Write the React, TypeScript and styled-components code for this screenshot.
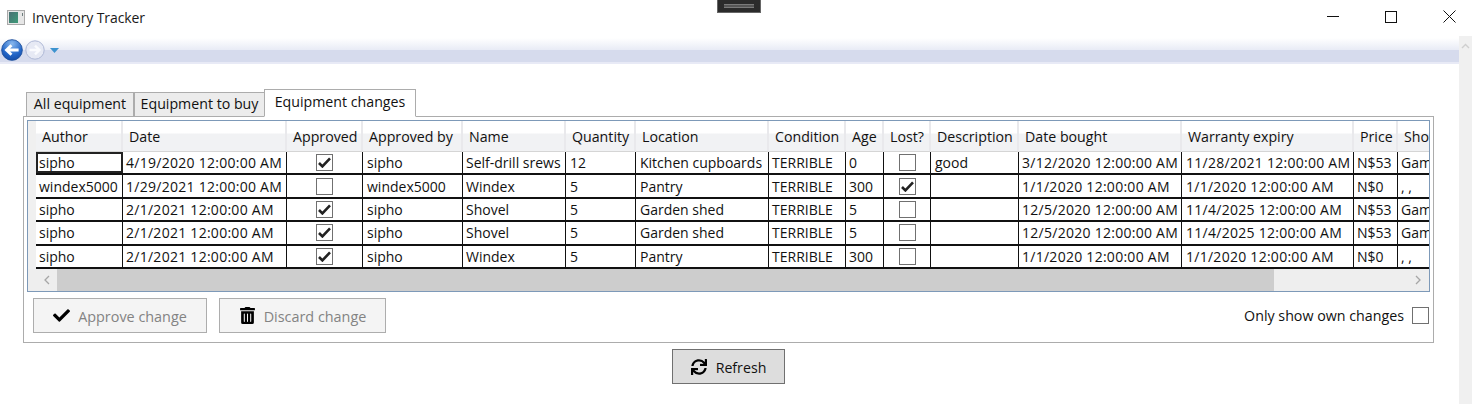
import React from 'react';
import styled, { createGlobalStyle } from 'styled-components';
import { FaCheck, FaTrashAlt, FaSync } from 'react-icons/fa';

const Global = createGlobalStyle`
  html, body { margin: 0; padding: 0; background: #fff; overflow: hidden; }
  body { font-family: "Open Sans", "Noto Sans", "Liberation Sans", sans-serif; font-size: 14px; color: #111; }
`;

const Windowed = styled.div`
  position: relative;
  width: 1472px;
  height: 404px;
  display: flex;
  flex-direction: column;
  overflow: hidden;
`;
const TitleBar = styled.div`
  height: 36px;
  display: flex;
  align-items: center;
  padding-left: 7px;
  gap: 7px;
  flex: none;
`;
const TitleText = styled.span`
  font-size: 14px;
  letter-spacing: -0.1px;
  flex: 1;
  color: #1a1a1a;
  padding-bottom: 2px;
`;
const WinButtons = styled.div`
  display: flex;
  align-items: center;
  gap: 46px;
  padding-right: 16px;
  padding-bottom: 3px;
`;
const DragHandle = styled.div`
  position: absolute;
  left: 717px;
  top: 0;
  width: 44px;
  height: 13px;
  background: #2b2b2b;
  border: 1px solid #666;
  border-top: none;
  box-sizing: border-box;
  display: flex;
  align-items: center;
  justify-content: center;
  &::after {
    content: '';
    width: 30px;
    height: 2px;
    margin-top: -1px;
    border-top: 1px solid #7a7a7a;
    border-bottom: 1px solid #7a7a7a;
    background: #555;
  }
`;
const Body = styled.div`
  flex: 1;
  display: flex;
  min-height: 0;
`;
const Main = styled.div`
  flex: 1;
  min-width: 0;
  display: flex;
  flex-direction: column;
`;
const VScroll = styled.div`
  width: 13px;
  flex: none;
  background: #f0f0f0;
  display: flex;
  justify-content: center;
  padding-top: 7px;
  box-sizing: border-box;
`;
const NavBar = styled.div`
  height: 28px;
  flex: none;
  display: flex;
  align-items: center;
  padding-left: 1px;
  gap: 2px;
  background: linear-gradient(to bottom, #fff 0, #fff 2px, #e9ecf6 13.5px, #d6dbed 14.5px, #d6dbed 26px, #e8eaf6 26.5px, #e8eaf6 28px);
`;
const TabArea = styled.div`
  margin: 25px 25px 0 23px;
  display: flex;
  flex-direction: column;
`;
const TabStrip = styled.div`
  display: flex;
  align-items: flex-end;
  height: 28px;
  padding-left: 3px;
  margin-bottom: -1px;
  position: relative;
  z-index: 1;
`;
const Tab = styled.div<{ $active?: boolean; $w: number }>`
  box-sizing: border-box;
  width: ${(p) => p.$w}px;
  height: ${(p) => (p.$active ? 28 : 25)}px;
  border: 1px solid #acacac;
  border-bottom-color: ${(p) => (p.$active ? '#fff' : '#acacac')};
  margin-left: ${(p) => (p.$active ? -1 : 0)}px;
  background: ${(p) => (p.$active ? '#fff' : '#ececec')};
  display: flex;
  align-items: center;
  justify-content: center;
  font-size: 14.2px;
  white-space: nowrap;
  padding-bottom: 3px;
`;
const Panel = styled.div`
  box-sizing: border-box;
  height: 227px;
  border: 1px solid #acacac;
  padding: 3px 3px 0;
  display: flex;
  flex-direction: column;
`;
const GridFrame = styled.div`
  box-sizing: border-box;
  height: 172px;
  flex: none;
  border: 1px solid #7d99b8;
  display: flex;
  flex-direction: column;
  overflow: hidden;
`;
const GridBody = styled.div`
  flex: 1;
  overflow: hidden;
  padding-left: 8px;
  background: linear-gradient(to right, #f0f0f0 8px, #fff 8px);
`;
const cols = '87px 164px 76px 100px 103px 70px 133px 77px 38px 47px 88px 163px 172px 44px 60px';
const HeaderRow = styled.div`
  display: grid;
  grid-template-columns: ${cols};
  height: 31px;
`;
const HeaderCell = styled.div`
  box-sizing: border-box;
  padding: 0 0 0 6px;
  display: flex;
  align-items: center;
  background: linear-gradient(to bottom, #fff 0, #fff 12px, #f1f2f4 13px, #f1f2f4 100%);
  border-right: 2px solid #e9e9ec;
  border-bottom: 1px solid #d5d5d5;
  white-space: nowrap;
  overflow: hidden;
  font-size: 14.2px;
`;
const DataRow = styled.div`
  display: grid;
  grid-template-columns: ${cols};
  height: 23.4px;
  box-sizing: border-box;
  border-bottom: 2px solid #111;
`;
const Cell = styled.div<{ $focus?: boolean; $date?: boolean; $inset?: boolean }>`
  box-sizing: border-box;
  padding: 0 0 0 ${(p) => (p.$inset ? 4 : 3)}px;
  display: flex;
  align-items: center;
  justify-content: flex-start;
  border-right: 1px solid #111;
  white-space: nowrap;
  overflow: hidden;
  font-size: 14px;
  letter-spacing: ${(p) => (p.$date ? '0.27px' : '0')};
  ${(p) => p.$focus && 'outline: 2px solid #222; outline-offset: -2px;'}
`;
const CheckCell = styled(Cell)`
  justify-content: center;
  padding: 0;
`;
const Box = styled.span`
  width: 17px;
  height: 17px;
  box-sizing: border-box;
  border: 1px solid #707070;
  background: #fff;
  display: inline-flex;
  align-items: center;
  justify-content: center;
  flex: none;
`;
const HScroll = styled.div`
  height: 22px;
  flex: none;
  display: flex;
  align-items: center;
  background: #eeeeee;
`;
const HButton = styled.div`
  width: 29px;
  height: 100%;
  display: flex;
  align-items: center;
  justify-content: center;
  padding-left: 8px;
  box-sizing: border-box;
  flex: none;
`;
const HThumb = styled.div`
  width: 1217px;
  height: 100%;
  background: #cdcdcd;
  flex: none;
`;
const HTrack = styled.div`
  flex: 1;
  height: 100%;
  display: flex;
  align-items: center;
  justify-content: flex-end;
  padding-right: 7px;
`;
const ActionRow = styled.div`
  display: flex;
  align-items: center;
  padding: 6px 1px 0 6px;
  gap: 12px;
`;
const ActionButton = styled.button<{ $w: number }>`
  box-sizing: border-box;
  width: ${(p) => p.$w}px;
  height: 35px;
  border: 1px solid #adadad;
  background: #f4f4f4;
  color: #838383;
  font: inherit;
  font-size: 14.4px;
  display: flex;
  align-items: center;
  justify-content: center;
  gap: 8px;
  padding: 1px 0 0;
  svg { color: #000; flex: none; margin-top: -1px; }
`;
const OwnToggle = styled.label`
  margin-left: auto;
  display: flex;
  align-items: center;
  gap: 8px;
  font-size: 14.25px;
  line-height: 19px;
  span { margin-top: -1px; }
`;
const RefreshWrap = styled.div`
  display: flex;
  justify-content: center;
  padding-top: 6px;
  margin-right: 2px;
`;
const RefreshButton = styled.button`
  box-sizing: border-box;
  width: 113px;
  height: 35px;
  border: 1px solid #707070;
  background: #dddddd;
  color: #111;
  font: inherit;
  font-size: 14.2px;
  display: flex;
  align-items: center;
  justify-content: center;
  gap: 9px;
  padding: 1px 0 0;
  svg { color: #000; flex: none; margin-top: -1px; }
`;

const Tick = () => (
  <svg width="13" height="11" viewBox="0 0 13 11" aria-hidden="true">
    <path d="M1 6 L4.4 9.4 L12 1.4" fill="none" stroke="#222" strokeWidth="2.6" />
  </svg>
);
const Check = ({ on }: { on?: boolean }) => <Box>{on && <Tick />}</Box>;

const headers = ['Author', 'Date', 'Approved', 'Approved by', 'Name', 'Quantity', 'Location', 'Condition', 'Age', 'Lost?', 'Description', 'Date bought', 'Warranty expiry', 'Price', 'Shop'];
type Row = { a: string; d: string; ok: boolean; by: string; n: string; q: string; l: string; c: string; age: string; lost: boolean; desc: string; b: string; w: string; p: string; s: string };
const rows: Row[] = [
  { a: 'sipho', d: '4/19/2020 12:00:00 AM', ok: true, by: 'sipho', n: 'Self-drill srews', q: '12', l: 'Kitchen cupboards', c: 'TERRIBLE', age: '0', lost: false, desc: 'good', b: '3/12/2020 12:00:00 AM', w: '11/28/2021 12:00:00 AM', p: 'N$53', s: 'Game' },
  { a: 'windex5000', d: '1/29/2021 12:00:00 AM', ok: false, by: 'windex5000', n: 'Windex', q: '5', l: 'Pantry', c: 'TERRIBLE', age: '300', lost: true, desc: '', b: '1/1/2020 12:00:00 AM', w: '1/1/2020 12:00:00 AM', p: 'N$0', s: ', ,' },
  { a: 'sipho', d: '2/1/2021 12:00:00 AM', ok: true, by: 'sipho', n: 'Shovel', q: '5', l: 'Garden shed', c: 'TERRIBLE', age: '5', lost: false, desc: '', b: '12/5/2020 12:00:00 AM', w: '11/4/2025 12:00:00 AM', p: 'N$53', s: 'Game' },
  { a: 'sipho', d: '2/1/2021 12:00:00 AM', ok: true, by: 'sipho', n: 'Shovel', q: '5', l: 'Garden shed', c: 'TERRIBLE', age: '5', lost: false, desc: '', b: '12/5/2020 12:00:00 AM', w: '11/4/2025 12:00:00 AM', p: 'N$53', s: 'Game' },
  { a: 'sipho', d: '2/1/2021 12:00:00 AM', ok: true, by: 'sipho', n: 'Windex', q: '5', l: 'Pantry', c: 'TERRIBLE', age: '300', lost: false, desc: '', b: '1/1/2020 12:00:00 AM', w: '1/1/2020 12:00:00 AM', p: 'N$0', s: ', ,' },
];

const AppIcon = () => (
  <svg width="18" height="16" viewBox="0 0 18 16" aria-hidden="true">
    <rect x="0.5" y="0.5" width="17" height="14" fill="#e6e6e6" stroke="#a9a9a9" />
    <defs>
      <linearGradient id="ai" x1="0" y1="0" x2="1" y2="1">
        <stop offset="0" stopColor="#4a6f73" />
        <stop offset="1" stopColor="#3d9a78" />
      </linearGradient>
    </defs>
    <rect x="2" y="2" width="9" height="11" fill="url(#ai)" />
    <rect x="15" y="3" width="1" height="3" fill="#6d7d7d" />
  </svg>
);

const BackBtn = () => (
  <svg width="22" height="22" viewBox="0 0 20 20" aria-hidden="true">
    <defs>
      <radialGradient id="bk" cx="0.5" cy="0.2" r="0.95">
        <stop offset="0" stopColor="#8ab9ee" />
        <stop offset="0.55" stopColor="#2467c8" />
        <stop offset="1" stopColor="#0d3f98" />
      </radialGradient>
    </defs>
    <circle cx="10" cy="10" r="9.4" fill="url(#bk)" stroke="#1b4f9c" strokeWidth="0.8" />
    <path d="M16 10 H5.5 M9.5 5.6 L5 10 L9.5 14.4" fill="none" stroke="#fff" strokeWidth="2.6" />
  </svg>
);
const FwdBtn = () => (
  <svg width="20" height="20" viewBox="0 0 20 20" aria-hidden="true">
    <circle cx="10" cy="10" r="9.2" fill="#e6e9f4" stroke="#aeb8d6" strokeWidth="1" />
    <path d="M4.5 10 H14 M10 5.6 L14.5 10 L10 14.4" fill="none" stroke="#fafbfe" strokeWidth="2.4" />
  </svg>
);
const NavDrop = () => (
  <svg width="9" height="5" viewBox="0 0 9 5" style={{ marginLeft: 3 }} aria-hidden="true">
    <path d="M0 0 H9 L4.5 5 Z" fill="#3d93cf" />
  </svg>
);
const Chevron = ({ d }: { d: string }) => (
  <svg width="8" height="10" viewBox="0 0 8 10" aria-hidden="true">
    <path d={d} fill="none" stroke="#a6a6a6" strokeWidth="1.3" />
  </svg>
);

export default function App() {
  return (
    <Windowed>
      <Global />
      <TitleBar>
        <AppIcon />
        <TitleText>Inventory Tracker</TitleText>
        <WinButtons>
          <svg width="12" height="12" viewBox="0 0 12 12" aria-hidden="true"><path d="M0 5.5 H12" stroke="#111" /></svg>
          <svg width="12" height="12" viewBox="0 0 12 12" aria-hidden="true"><rect x="0.5" y="0.5" width="11" height="11" fill="none" stroke="#111" /></svg>
          <svg width="13" height="13" viewBox="0 0 13 13" aria-hidden="true"><path d="M0.5 0.5 L12.5 12.5 M12.5 0.5 L0.5 12.5" stroke="#111" /></svg>
        </WinButtons>
      </TitleBar>
      <DragHandle />
      <Body>
        <Main>
          <NavBar>
            <BackBtn />
            <FwdBtn />
            <NavDrop />
          </NavBar>
          <TabArea>
            <TabStrip>
              <Tab $w={108}>All equipment</Tab>
              <Tab $w={131}>Equipment to buy</Tab>
              <Tab $active $w={152}>Equipment changes</Tab>
            </TabStrip>
            <Panel>
              <GridFrame>
                <GridBody>
                  <HeaderRow>
                    {headers.map((h) => (
                      <HeaderCell key={h}>{h}</HeaderCell>
                    ))}
                  </HeaderRow>
                  {rows.map((r, i) => (
                    <DataRow key={i}>
                      <Cell $focus={i === 0}>{r.a}</Cell>
                      <Cell $date>{r.d}</Cell>
                      <CheckCell><Check on={r.ok} /></CheckCell>
                      <Cell $inset>{r.by}</Cell>
                      <Cell>{r.n}</Cell>
                      <Cell $inset>{r.q}</Cell>
                      <Cell $inset>{r.l}</Cell>
                      <Cell>{r.c}</Cell>
                      <Cell>{r.age}</Cell>
                      <CheckCell><Check on={r.lost} /></CheckCell>
                      <Cell $inset>{r.desc}</Cell>
                      <Cell $date>{r.b}</Cell>
                      <Cell $date $inset>{r.w}</Cell>
                      <Cell>{r.p}</Cell>
                      <Cell>{r.s}</Cell>
                    </DataRow>
                  ))}
                </GridBody>
                <HScroll>
                  <HButton><Chevron d="M6 1 L2 5 L6 9" /></HButton>
                  <HThumb />
                  <HTrack><Chevron d="M2 1 L6 5 L2 9" /></HTrack>
                </HScroll>
              </GridFrame>
              <ActionRow>
                <ActionButton $w={174}><FaCheck size={17} />Approve change</ActionButton>
                <ActionButton $w={167}><FaTrashAlt size={17} />Discard change</ActionButton>
                <OwnToggle>Only show own changes<Check /></OwnToggle>
              </ActionRow>
            </Panel>
          </TabArea>
          <RefreshWrap>
            <RefreshButton><FaSync size={16} />Refresh</RefreshButton>
          </RefreshWrap>
        </Main>
        <VScroll>
          <svg width="9" height="6" viewBox="0 0 9 6" aria-hidden="true"><path d="M1 5 L4.5 1.5 L8 5" fill="none" stroke="#cfcfcf" strokeWidth="1.4" /></svg>
        </VScroll>
      </Body>
    </Windowed>
  );
}
